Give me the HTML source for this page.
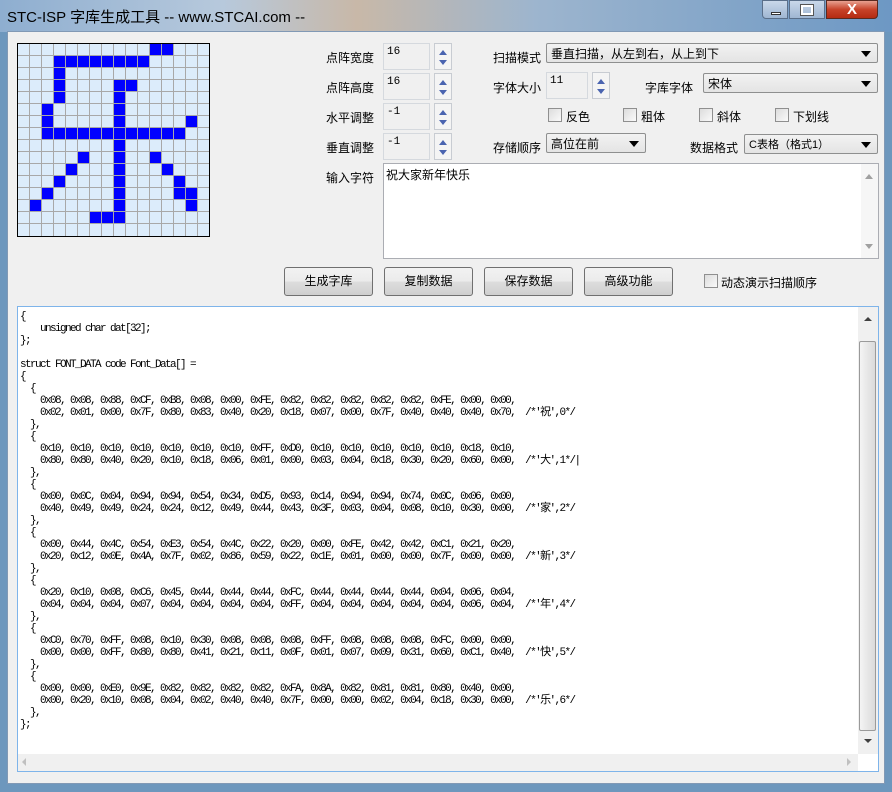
<!DOCTYPE html>
<html><head><meta charset="utf-8"><style>
*{margin:0;padding:0;box-sizing:border-box}
body{width:892px;height:792px;overflow:hidden;position:relative;background:#6d97bd;font-family:"Liberation Sans","Noto Sans CJK SC",sans-serif;font-size:12px;color:#000}
.title{position:absolute;left:0;top:0;width:892px;height:32px;background:linear-gradient(90deg,#8eaed0 0%,#b7c9dc 25%,#c8b8a8 40%,#9db5ce 60%,#6d98c4 100%)}
.title span{position:absolute;left:7px;top:6px;font-size:15px;color:#000}
.client{position:absolute;left:7px;top:31px;width:878px;height:753px;background:#f0f0f0;border:1px solid #8199b5}
.a{position:absolute}
.lbl{position:absolute;font-size:12px;white-space:nowrap}
.edit{position:absolute;background:#f0f0f0;border:1px solid #d5d9de;font-size:11px;padding:2px 0 0 3px;font-family:"Liberation Mono",monospace}
.spin{position:absolute;width:18px;height:27px;border:1px solid #c8ccd2;background:#f4f4f4}
.spin i{position:absolute;left:4px;width:0;height:0;border-left:4px solid transparent;border-right:4px solid transparent}
.combo{position:absolute;height:20px;border:1px solid #8e8f8f;border-radius:2px;background:linear-gradient(#f2f2f2,#e4e4e4);font-size:12px;padding:1px 0 0 4px}
.combo:after{content:"";position:absolute;right:6px;top:7px;border-left:5px solid transparent;border-right:5px solid transparent;border-top:6px solid #000}
.chk{position:absolute;width:14px;height:14px;border:1px solid #8f8f8f;background:linear-gradient(135deg,#dcdcdc,#fafafa)}
.btn{position:absolute;height:29px;width:89px;border:1px solid #707070;border-radius:3px;background:linear-gradient(#f2f2f2 0%,#ebebeb 50%,#dddddd 51%,#cfcfcf 100%);text-align:center;line-height:27px;font-size:12px}
pre{position:absolute;left:20px;top:311px;font-family:"Liberation Mono","Noto Sans CJK SC",monospace;font-size:11px;letter-spacing:-1.6px;line-height:12px;color:#000}
</style></head><body>
<div class="title"><span>STC-ISP 字库生成工具 -- www.STCAI.com --</span>
<div class="a" style="left:762px;top:0;width:26px;height:19px;border:1px solid #5a6f8a;border-radius:0 0 0 4px;background:linear-gradient(#c9d8ea,#9fb6d2)"><div class="a" style="left:8px;top:11px;width:10px;height:3px;background:#fff;border:1px solid #333"></div></div>
<div class="a" style="left:789px;top:0;width:36px;height:19px;border:1px solid #5a6f8a;background:linear-gradient(#c9d8ea,#9fb6d2)"><div class="a" style="left:11px;top:4px;width:12px;height:10px;border:2px solid #fff;outline:1px solid #555"></div></div>
<div class="a" style="left:826px;top:0;width:52px;height:19px;border:1px solid #5a2a20;border-radius:0 0 4px 0;background:linear-gradient(#e8a090,#c7432a 50%,#b52b12);color:#fff;font-weight:bold;font-size:15px;text-align:center;line-height:18px">X</div>
</div>
<div class="client"></div>
<svg class="a" style="left:17px;top:43px" width="193" height="194">
<rect x="0" y="0" width="193" height="194" fill="#dcecfb"/>
<g fill="#0000ff" id="px"></g>
<g stroke="#a8a8a8" stroke-width="1" id="gl"></g>
<rect x="0.5" y="0.5" width="192" height="193" fill="none" stroke="#000"/>
</svg>
<script>
var rows={0:[11,12],1:[3,4,5,6,7,8,9,10],2:[3],3:[3,8,9],4:[3,8],5:[2,8],6:[2,8,14],7:[2,3,4,5,6,7,8,9,10,11,12,13],8:[8],9:[5,8,11],10:[4,8,12],11:[3,8,13],12:[2,8,13,14],13:[1,8,14],14:[6,7,8]};
var px=document.getElementById('px'),gl=document.getElementById('gl'),s='',g='';
for(var r in rows)rows[r].forEach(function(c){s+='<rect x="'+(c*12)+'" y="'+(r*12)+'" width="12" height="12"/>';});
for(var i=1;i<16;i++){g+='<line x1="'+(i*12+0.5)+'" y1="0" x2="'+(i*12+0.5)+'" y2="194"/><line x1="0" y1="'+(i*12+0.5)+'" x2="193" y2="'+(i*12+0.5)+'"/>';}
px.innerHTML=s;gl.innerHTML=g;
</script>
<div class="lbl" style="left:326px;top:49px">点阵宽度</div>
<div class="lbl" style="left:326px;top:79px">点阵高度</div>
<div class="lbl" style="left:326px;top:109px">水平调整</div>
<div class="lbl" style="left:326px;top:139px">垂直调整</div>
<div class="lbl" style="left:326px;top:169px">输入字符</div>
<div class="edit" style="left:383px;top:43px;width:47px;height:27px">16</div>
<div class="edit" style="left:383px;top:73px;width:47px;height:27px">16</div>
<div class="edit" style="left:383px;top:103px;width:47px;height:27px">-1</div>
<div class="edit" style="left:383px;top:133px;width:47px;height:27px">-1</div>
<div class="spin" style="left:434px;top:43px"><i style="top:6px;border-bottom:5px solid #4a64b0"></i><i style="top:16px;border-top:5px solid #4a64b0"></i></div>
<div class="spin" style="left:434px;top:73px"><i style="top:6px;border-bottom:5px solid #4a64b0"></i><i style="top:16px;border-top:5px solid #4a64b0"></i></div>
<div class="spin" style="left:434px;top:103px"><i style="top:6px;border-bottom:5px solid #4a64b0"></i><i style="top:16px;border-top:5px solid #4a64b0"></i></div>
<div class="spin" style="left:434px;top:133px"><i style="top:6px;border-bottom:5px solid #4a64b0"></i><i style="top:16px;border-top:5px solid #4a64b0"></i></div>
<div class="lbl" style="left:493px;top:49px">扫描模式</div>
<div class="combo" style="left:546px;top:43px;width:332px">垂直扫描，从左到右，从上到下</div>
<div class="lbl" style="left:493px;top:79px">字体大小</div>
<div class="edit" style="left:546px;top:72px;width:42px;height:27px">11</div>
<div class="spin" style="left:592px;top:72px"><i style="top:6px;border-bottom:5px solid #4a64b0"></i><i style="top:16px;border-top:5px solid #4a64b0"></i></div>
<div class="lbl" style="left:645px;top:79px">字库字体</div>
<div class="combo" style="left:703px;top:73px;width:175px">宋体</div>
<div class="chk" style="left:548px;top:108px"></div><div class="lbl" style="left:566px;top:108px">反色</div>
<div class="chk" style="left:623px;top:108px"></div><div class="lbl" style="left:641px;top:108px">粗体</div>
<div class="chk" style="left:699px;top:108px"></div><div class="lbl" style="left:717px;top:108px">斜体</div>
<div class="chk" style="left:775px;top:108px"></div><div class="lbl" style="left:793px;top:108px">下划线</div>
<div class="lbl" style="left:493px;top:139px">存储顺序</div>
<div class="combo" style="left:546px;top:133px;width:100px">高位在前</div>
<div class="lbl" style="left:690px;top:139px">数据格式</div>
<div class="combo" style="left:744px;top:134px;width:134px;font-size:11px">C表格（格式1）</div>
<div class="a" style="left:383px;top:163px;width:496px;height:96px;background:#fff;border:1px solid #abadb3"><div class="a" style="left:2px;top:2px;font-size:12px">祝大家新年快乐</div><div class="a" style="right:0;top:0;width:17px;height:94px;background:#f6f6f6"><div class="a" style="left:4px;top:10px;border-left:4px solid transparent;border-right:4px solid transparent;border-bottom:5px solid #a0a0a0"></div><div class="a" style="left:4px;top:80px;border-left:4px solid transparent;border-right:4px solid transparent;border-top:5px solid #a0a0a0"></div></div></div>
<div class="btn" style="left:284px;top:267px">生成字库</div>
<div class="btn" style="left:384px;top:267px">复制数据</div>
<div class="btn" style="left:484px;top:267px">保存数据</div>
<div class="btn" style="left:584px;top:267px">高级功能</div>
<div class="chk" style="left:704px;top:274px"></div><div class="lbl" style="left:721px;top:274px">动态演示扫描顺序</div>
<div class="a" style="left:17px;top:306px;width:862px;height:466px;background:#fff;border:1px solid #7eb4ea"></div>
<div class="a" style="left:858px;top:307px;width:20px;height:447px;background:#f0f0f0"><div class="a" style="left:6px;top:10px;border-left:4px solid transparent;border-right:4px solid transparent;border-bottom:4px solid #404040"></div><div class="a" style="left:1px;top:34px;width:17px;height:390px;border:1px solid #9a9a9a;border-radius:2px;background:linear-gradient(90deg,#f4f4f4,#dadada)"></div><div class="a" style="left:6px;top:432px;border-left:4px solid transparent;border-right:4px solid transparent;border-top:4px solid #404040"></div></div>
<div class="a" style="left:18px;top:754px;width:840px;height:17px;background:#f0f0f0"><div class="a" style="left:4px;top:4px;border-top:4px solid transparent;border-bottom:4px solid transparent;border-right:4px solid #c0c0c0"></div><div class="a" style="left:829px;top:4px;border-top:4px solid transparent;border-bottom:4px solid transparent;border-left:4px solid #c0c0c0"></div></div>
<pre>{
    unsigned char dat[32];
};

struct FONT_DATA code Font_Data[] =
{
  {
    0x08, 0x08, 0x88, 0xCF, 0xB8, 0x08, 0x00, 0xFE, 0x82, 0x82, 0x82, 0x82, 0x82, 0xFE, 0x00, 0x00,
    0x02, 0x01, 0x00, 0x7F, 0x80, 0x83, 0x40, 0x20, 0x18, 0x07, 0x00, 0x7F, 0x40, 0x40, 0x40, 0x70,  /*'祝',0*/
  },
  {
    0x10, 0x10, 0x10, 0x10, 0x10, 0x10, 0x10, 0xFF, 0xD0, 0x10, 0x10, 0x10, 0x10, 0x10, 0x18, 0x10,
    0x80, 0x80, 0x40, 0x20, 0x10, 0x18, 0x06, 0x01, 0x00, 0x03, 0x04, 0x18, 0x30, 0x20, 0x60, 0x00,  /*'大',1*/|
  },
  {
    0x00, 0x0C, 0x04, 0x94, 0x94, 0x54, 0x34, 0xD5, 0x93, 0x14, 0x94, 0x94, 0x74, 0x0C, 0x06, 0x00,
    0x40, 0x49, 0x49, 0x24, 0x24, 0x12, 0x49, 0x44, 0x43, 0x3F, 0x03, 0x04, 0x08, 0x10, 0x30, 0x00,  /*'家',2*/
  },
  {
    0x00, 0x44, 0x4C, 0x54, 0xE3, 0x54, 0x4C, 0x22, 0x20, 0x00, 0xFE, 0x42, 0x42, 0xC1, 0x21, 0x20,
    0x20, 0x12, 0x0E, 0x4A, 0x7F, 0x02, 0x86, 0x59, 0x22, 0x1E, 0x01, 0x00, 0x00, 0x7F, 0x00, 0x00,  /*'新',3*/
  },
  {
    0x20, 0x10, 0x08, 0xC6, 0x45, 0x44, 0x44, 0x44, 0xFC, 0x44, 0x44, 0x44, 0x44, 0x04, 0x06, 0x04,
    0x04, 0x04, 0x04, 0x07, 0x04, 0x04, 0x04, 0x04, 0xFF, 0x04, 0x04, 0x04, 0x04, 0x04, 0x06, 0x04,  /*'年',4*/
  },
  {
    0xC0, 0x70, 0xFF, 0x08, 0x10, 0x30, 0x08, 0x08, 0x08, 0xFF, 0x08, 0x08, 0x08, 0xFC, 0x00, 0x00,
    0x00, 0x00, 0xFF, 0x80, 0x80, 0x41, 0x21, 0x11, 0x0F, 0x01, 0x07, 0x09, 0x31, 0x60, 0xC1, 0x40,  /*'快',5*/
  },
  {
    0x00, 0x00, 0xE0, 0x9E, 0x82, 0x82, 0x82, 0x82, 0xFA, 0x8A, 0x82, 0x81, 0x81, 0x80, 0x40, 0x00,
    0x00, 0x20, 0x10, 0x08, 0x04, 0x02, 0x40, 0x40, 0x7F, 0x00, 0x00, 0x02, 0x04, 0x18, 0x30, 0x00,  /*'乐',6*/
  },
};</pre>
</body></html>
